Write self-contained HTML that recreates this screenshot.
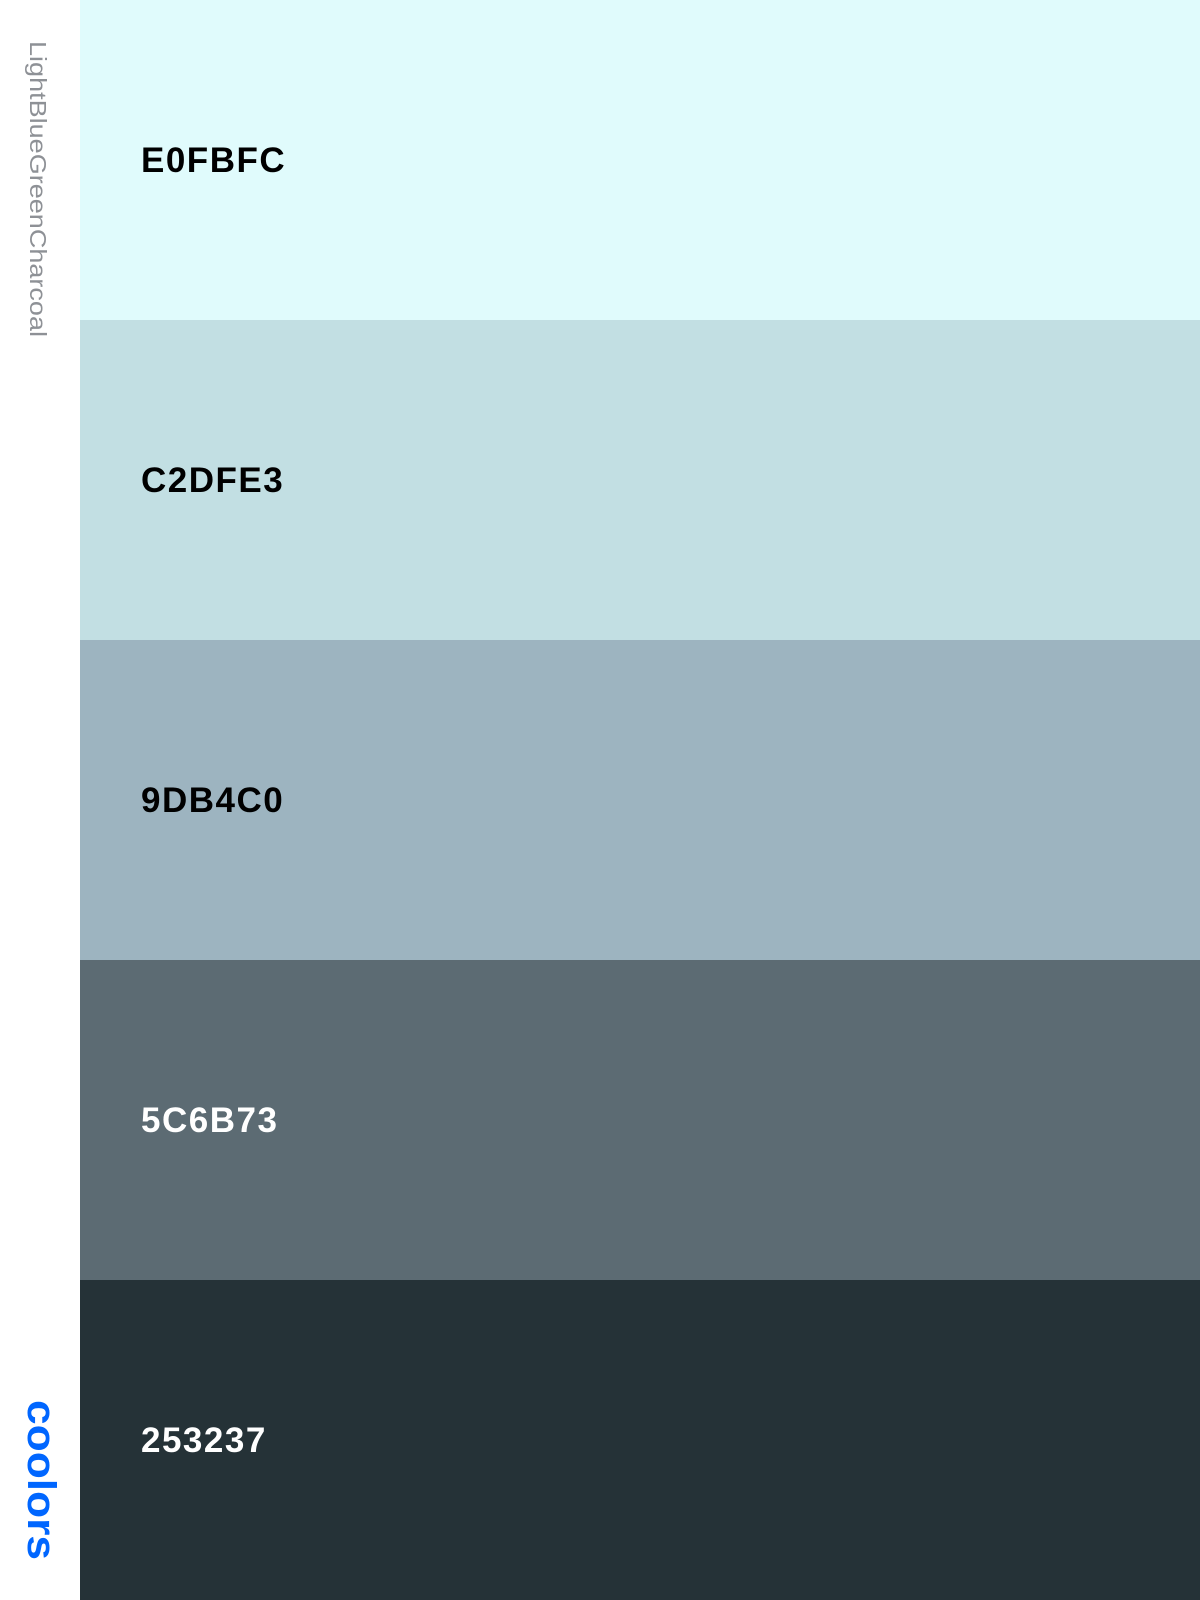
<!DOCTYPE html>
<html><head><meta charset="utf-8"><style>
html,body{margin:0;padding:0;width:1200px;height:1600px;overflow:hidden;background:#fff;font-family:"Liberation Sans",sans-serif}
.side{position:absolute;left:0;top:0;width:80px;height:1600px;background:#fff}
.s{position:absolute;left:80px;width:1120px;height:320px}
.s span{position:absolute;left:61px;top:143px;font-size:35px;font-weight:bold;line-height:35px;letter-spacing:1.5px}
</style></head><body>
<div class="side">
<svg width="80" height="1600" style="position:absolute;left:0;top:0">
<text transform="translate(30,41) rotate(90)" font-family="Liberation Sans, sans-serif" font-size="23" fill="#8e9196" textLength="296" lengthAdjust="spacingAndGlyphs">LightBlueGreenCharcoal</text>
<text transform="translate(28,1400) rotate(90)" font-family="Liberation Sans, sans-serif" font-weight="bold" font-size="40" fill="#0066ff" textLength="160" lengthAdjust="spacingAndGlyphs">coolors</text>
</svg>
</div>
<div class="s" style="top:0;background:#e0fbfc"><span style="color:#000">E0FBFC</span></div>
<div class="s" style="top:320px;background:#c2dfe3"><span style="color:#000">C2DFE3</span></div>
<div class="s" style="top:640px;background:#9db4c0"><span style="color:#000">9DB4C0</span></div>
<div class="s" style="top:960px;background:#5c6b73"><span style="color:#fff">5C6B73</span></div>
<div class="s" style="top:1280px;background:#253237"><span style="color:#fff">253237</span></div>
</body></html>
